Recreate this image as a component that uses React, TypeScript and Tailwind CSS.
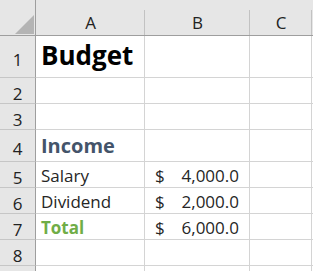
import React from "react";

const F = { fontFamily: "'Open Sans', Lato, sans-serif" };

function ColHead({ label }: { label: string }) {
  return (
    <div className="relative flex h-[36px] items-end justify-center pb-[4px] text-[17px] text-[#222] bg-[#e6e6e6] border-b border-[#9e9e9e]">
      <span className="leading-none">{label}</span>
      <div className="absolute right-0 top-[10px] bottom-0 w-px bg-[#c2c2c2]" />
    </div>
  );
}

function RowHead({ n, h }: { n?: number; h: string }) {
  return (
    <div className={`flex items-center justify-center pt-[5px] text-[17px] text-[#222] bg-[#e6e6e6] border-r border-b border-r-[#9e9e9e] border-b-[#c6c6c6] ${h}`}>
      <span className="leading-none">{n}</span>
    </div>
  );
}

function Cell({ children, className = "" }: { children?: React.ReactNode; className?: string }) {
  return (
    <div className={`flex items-end border-r border-b border-[#d4d4d4] ${className}`}>{children}</div>
  );
}

function Money({ v }: { v: string }) {
  return (
    <Cell className="px-[10px] pb-[3px] text-[17px] text-[#262626]">
      <div className="flex w-full justify-between leading-none">
        <span>$</span>
        <span>{v}</span>
      </div>
    </Cell>
  );
}

export default function App() {
  const rows: { n?: number; h: string; a?: React.ReactNode; b?: string }[] = [
    { n: 1, h: "h-[42px]", a: <span className="text-[26px] font-bold text-black leading-none pb-[5px]">Budget</span> },
    { n: 2, h: "h-[26px]" },
    { n: 3, h: "h-[26px]" },
    { n: 4, h: "h-[32px]", a: <span className="text-[20px] font-bold text-[#44546a] leading-none pb-[1px]">Income</span> },
    { n: 5, h: "h-[26px]", a: <span className="text-[17px] text-[#262626] leading-none -mb-px">Salary</span>, b: "4,000.0" },
    { n: 6, h: "h-[26px]", a: <span className="text-[17px] text-[#262626] leading-none -mb-px">Dividend</span>, b: "2,000.0" },
    { n: 7, h: "h-[26px]", a: <span className="text-[17px] font-bold text-[#70ad47] leading-none -mb-px">Total</span>, b: "6,000.0" },
    { n: 8, h: "h-[26px]" },
    { h: "h-[26px]" },
  ];
  return (
    <div className="w-[313px] h-[271px] overflow-hidden bg-white" style={F}>
      <div className="grid grid-cols-[36px_109px_105px_62px_1fr]">
        <div className="relative h-[36px] bg-[#e6e6e6] border-b border-r border-[#9e9e9e]">
          <svg className="absolute left-[15px] top-[15px]" width="19" height="19" viewBox="0 0 19 19">
            <polygon points="19,0 19,19 0,19" fill="#b4b4b4" />
          </svg>
        </div>
        <ColHead label="A" />
        <ColHead label="B" />
        <ColHead label="C" />
        <div className="h-[36px] bg-[#e6e6e6] border-b border-[#9e9e9e]" />
        {rows.map((r, i) => (
          <React.Fragment key={i}>
            <RowHead n={r.n} h={r.h} />
            <Cell className="pl-[5px] pb-[4px]">{r.a}</Cell>
            {r.b ? <Money v={r.b} /> : <Cell />}
            <Cell />
            <div className="border-b border-[#d4d4d4]" />
          </React.Fragment>
        ))}
      </div>
    </div>
  );
}
